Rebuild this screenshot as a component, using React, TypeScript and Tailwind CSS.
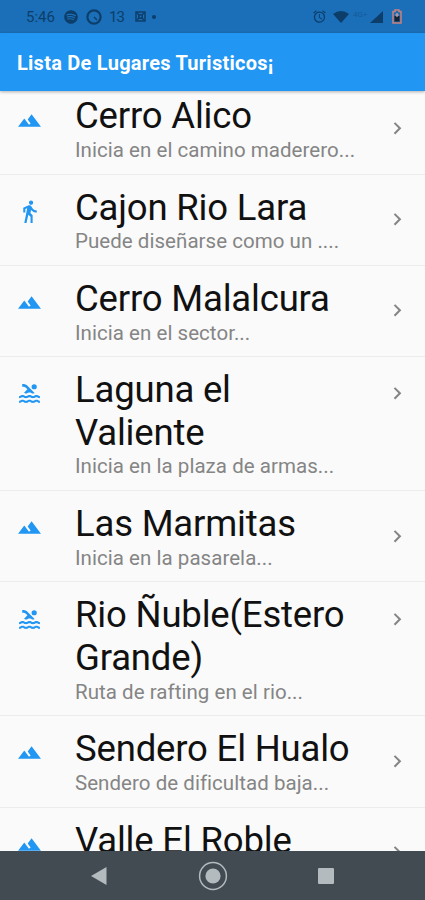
import { MdTerrain, MdDirectionsWalk, MdPool, MdChevronRight, MdAlarm } from "react-icons/md";
import { FaSpotify } from "react-icons/fa";
import type { IconType } from "react-icons";

type Place = { icon: IconType; title: string; subtitle: string; tall?: boolean };

const places: Place[] = [
  { icon: MdTerrain, title: "Cerro Alico", subtitle: "Inicia en el camino maderero..." },
  { icon: MdDirectionsWalk, title: "Cajon Rio Lara", subtitle: "Puede diseñarse como un ...." },
  { icon: MdTerrain, title: "Cerro Malalcura", subtitle: "Inicia en el sector..." },
  { icon: MdPool, title: "Laguna el Valiente", subtitle: "Inicia en la plaza de armas...", tall: true },
  { icon: MdTerrain, title: "Las Marmitas", subtitle: "Inicia en la pasarela..." },
  { icon: MdPool, title: "Rio Ñuble(Estero Grande)", subtitle: "Ruta de rafting en el rio...", tall: true },
  { icon: MdTerrain, title: "Sendero El Hualo", subtitle: "Sendero de dificultad baja..." },
  { icon: MdTerrain, title: "Valle El Roble", subtitle: "" },
];

function StatusBar() {
  return (
    <div className="flex h-[33px] shrink-0 items-center bg-[#1a6fb8] pl-[26px] pr-[23px] text-[#0d3e6a]">
      <span className="w-[38px] pt-px text-[15px] leading-none">5:46</span>
      <FaSpotify className="size-[14px]" />
      <svg className="ml-2 size-4" viewBox="0 0 16 16" fill="none" stroke="currentColor" strokeWidth="2.2">
        <circle cx="8" cy="8" r="6.6" />
        <path d="M8 8l3 3" strokeWidth="1.4" />
      </svg>
      <span className="ml-[7px] w-[26px] pt-px text-[15px] leading-none tracking-[-1px]">13</span>
      <svg className="size-[11px]" viewBox="0 0 11 11" fill="none" stroke="currentColor" strokeWidth="1.5">
        <rect x="1" y="1" width="9" height="9" />
        <circle cx="5.5" cy="5.5" r="1.8" />
        <path d="M2 2l2 2M9 2L7 4M2 9l2-2M9 9L7 7" />
      </svg>
      <span className="ml-[6px] size-1 rounded-full bg-current" />
      <span className="grow" />
      <MdAlarm className="size-[15px]" />
      <svg className="ml-[6px] h-3 w-4" viewBox="0 0 16 12" fill="currentColor">
        <path d="M0 3Q8-3 16 3L8 12Z" />
      </svg>
      <span className="mb-1 ml-1 w-[17px] text-[8px] leading-none opacity-40">4G+</span>
      <svg className="h-3 w-[13px]" viewBox="0 0 13 12" fill="currentColor">
        <path d="M13 0v12H0z" />
      </svg>
      <svg className="ml-[9px] h-[15px] w-[10px]" viewBox="0 0 10 15">
        <path d="M3 1h4v1.5h2V14H1V2.5h2z" fill="#1c6cae" stroke="#c8817f" strokeWidth="1.5" />
        <path d="M2.5 7h5v5.5h-5z" fill="#152330" />
        <path d="M5 4v4M3.2 6h3.6" stroke="#d6a09b" strokeWidth="1.2" />
      </svg>
    </div>
  );
}

function PlaceRow({ icon: Icon, title, subtitle, tall }: Place) {
  return (
    <li className="flex shrink-0 border-b border-[#ececec] pt-3 pb-[12.2px] pl-[17px] pr-4">
      <Icon className="mt-[12.2px] size-[25px] shrink-0 text-[#2196f3]" />
      <div className="ml-[33px] w-[290px] shrink-0">
        <h2 className="text-[36.5px] leading-[42.6px] tracking-[-0.18px] text-[#111]">{title}</h2>
        <p className="whitespace-nowrap pt-px text-[20.5px] leading-[22.5px] tracking-[0.04px] text-[#858585]">{subtitle}</p>
      </div>
      <MdChevronRight
        className={`${tall ? "mt-[12.2px]" : "mt-[20.4px]"} ml-[20px] size-[24.5px] shrink-0 text-[#858585]`}
      />
    </li>
  );
}

function NavigationBar() {
  return (
    <nav className="flex h-[49px] shrink-0 items-center bg-[#424a52] text-[#b3bbbf]">
      <svg className="ml-[91px] h-[18px] w-4" viewBox="0 0 16 18" fill="currentColor">
        <path d="M15.5 0v18L0 9z" />
      </svg>
      <svg className="ml-[91px] size-[30px]" viewBox="0 0 30 30">
        <circle cx="15" cy="15" r="13.4" fill="none" stroke="currentColor" strokeWidth="1.5" />
        <circle cx="15" cy="15" r="7.6" fill="currentColor" />
      </svg>
      <span className="ml-[90px] size-4 rounded-[1px] bg-current" />
    </nav>
  );
}

export default function App() {
  return (
    <div className="flex h-[900px] w-[425px] flex-col overflow-hidden bg-[#fafafa] font-[Roboto,sans-serif]">
      <StatusBar />
      <header className="z-10 flex h-[58px] shrink-0 items-center bg-[#2196f3] pl-[17px] pt-[2px] shadow-[0_1px_3px_rgba(0,0,0,0.3)]">
        <h1 className="whitespace-nowrap text-[20px] font-bold tracking-[0.25px] text-white">Lista De Lugares Turisticos¡</h1>
      </header>
      <main className="min-h-0 flex-1 overflow-hidden">
        <ul className="-mt-[7.6px] flex flex-col">
          {places.map((place) => (
            <PlaceRow key={place.title} {...place} />
          ))}
        </ul>
      </main>
      <NavigationBar />
    </div>
  );
}
